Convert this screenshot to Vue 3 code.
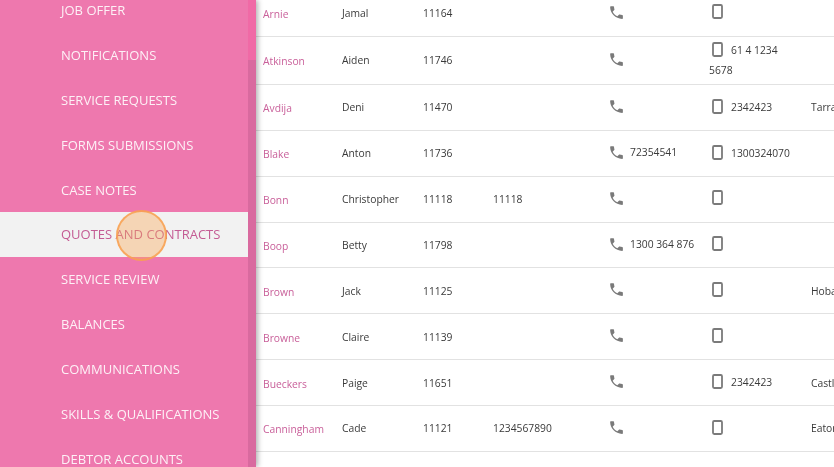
<script setup>
const menu = [
  'JOB OFFER', 'NOTIFICATIONS', 'SERVICE REQUESTS', 'FORMS SUBMISSIONS', 'CASE NOTES',
  'QUOTES AND CONTRACTS', 'SERVICE REVIEW', 'BALANCES', 'COMMUNICATIONS',
  'SKILLS & QUALIFICATIONS', 'DEBTOR ACCOUNTS'
]

const rows = [
  { last: 'Arnie', first: 'Jamal', id: '11164', alt: '', phone: '', mobile: '', city: '' },
  { last: 'Atkinson', first: 'Aiden', id: '11746', alt: '', phone: '', mobile: '61 4 1234 5678', city: '' },
  { last: 'Avdija', first: 'Deni', id: '11470', alt: '', phone: '', mobile: '2342423', city: 'Tarra' },
  { last: 'Blake', first: 'Anton', id: '11736', alt: '', phone: '72354541', mobile: '1300324070', city: '' },
  { last: 'Bonn', first: 'Christopher', id: '11118', alt: '11118', phone: '', mobile: '', city: '' },
  { last: 'Boop', first: 'Betty', id: '11798', alt: '', phone: '1300 364 876', mobile: '', city: '' },
  { last: 'Brown', first: 'Jack', id: '11125', alt: '', phone: '', mobile: '', city: 'Hobart' },
  { last: 'Browne', first: 'Claire', id: '11139', alt: '', phone: '', mobile: '', city: '' },
  { last: 'Bueckers', first: 'Paige', id: '11651', alt: '', phone: '', mobile: '2342423', city: 'Castle Hill' },
  { last: 'Canningham', first: 'Cade', id: '11121', alt: '1234567890', phone: '', mobile: '', city: 'Eaton' }
]
</script>

<template>
  <div class="page">
    <aside class="sidebar">
      <ul class="menu">
        <li v-for="item in menu" :key="item" :class="{ active: item === 'QUOTES AND CONTRACTS' }">{{ item }}</li>
      </ul>
      <div class="click-dot"></div>
      <div class="scrollbar"><div class="thumb"></div></div>
    </aside>

    <main class="table">
      <div class="row" v-for="r in rows" :key="r.id">
        <div class="last">{{ r.last }}</div>
        <div>{{ r.first }}</div>
        <div>{{ r.id }}</div>
        <div>{{ r.alt }}</div>
        <div class="phone">
          <svg class="ico-phone" viewBox="0 0 24 24" width="17" height="17"><path d="M6.62 10.79c1.44 2.83 3.76 5.14 6.59 6.59l2.2-2.2c.27-.27.67-.36 1.02-.24 1.12.37 2.33.57 3.57.57.55 0 1 .45 1 1V20c0 .55-.45 1-1 1-9.39 0-17-7.61-17-17 0-.55.45-1 1-1h3.5c.55 0 1 .45 1 1 0 1.25.2 2.45.57 3.57.11.35.03.74-.25 1.02l-2.2 2.2z"/></svg>
          <span v-if="r.phone">{{ r.phone }}</span>
        </div>
        <div class="mobile">
          <svg class="ico-mobile" viewBox="0 0 11 15" width="11" height="15"><rect x="1" y="1" width="9" height="13" rx="1.2"/></svg>
          <span v-if="r.mobile">{{ r.mobile }}</span>
        </div>
        <div class="city">{{ r.city }}</div>
      </div>
    </main>
  </div>
</template>

<style>
html, body { margin: 0; background: #fff; }
</style>

<style scoped>
.page {
  display: flex;
  width: 834px;
  height: 467px;
  overflow: hidden;
  font-family: "Open Sans", "Liberation Sans", sans-serif;
  filter: blur(.3px);
}
.sidebar {
  position: relative;
  flex: 0 0 256px;
  height: 467px;
  background: #ee78ae;
  box-shadow: 2px 0 5px rgba(0, 0, 0, .3);
  z-index: 2;
}
.menu {
  list-style: none;
  margin: -12px 8px 0 0;
  padding: 0;
}
.menu li {
  height: 44.9px;
  line-height: 45px;
  padding-left: 61px;
  font-size: 13px;
  color: #fdf1f6;
}
.menu li.active {
  background: #f2f2f2;
  color: #c45c94;
}
.click-dot {
  position: absolute;
  left: 116px;
  top: 210px;
  width: 51px;
  height: 51px;
  box-sizing: border-box;
  border-radius: 50%;
  border: 2px solid rgba(248, 160, 80, .85);
  background: rgba(250, 170, 90, .4);
}
.scrollbar {
  position: absolute;
  top: 0;
  right: 0;
  bottom: 0;
  width: 8px;
  background: #d96a9f;
}
.thumb {
  height: 60px;
  background: #f06aa6;
}
.table {
  flex: 1;
  margin-top: -9.3px;
  min-width: 0;
}
.row {
  display: grid;
  grid-template-columns: 79px 81px 70px 116px 100px 102px 1fr;
  align-items: center;
  box-sizing: border-box;
  min-height: 45.85px;
  padding-left: 7px;
  border-bottom: 1px solid #e2e2e2;
  font-size: 10.3px;
  color: #3a3a3a;
}
.last {
  color: #c9609a;
  white-space: nowrap;
  padding-top: 2px;
}
.phone {
  display: flex;
  align-items: center;
  gap: 5px;
  margin: -2px 0 0 -1px;
}
.mobile {
  line-height: 20px;
  padding: 3px 16px 4.5px 0;
}
.ico-phone {
  fill: #7a7a7a;
  flex: none;
}
.ico-mobile {
  fill: none;
  stroke: #7a7a7a;
  stroke-width: 1.8;
  margin: 0 8px 0 3px;
  vertical-align: -3px;
}
.city {
  white-space: nowrap;
}
</style>
